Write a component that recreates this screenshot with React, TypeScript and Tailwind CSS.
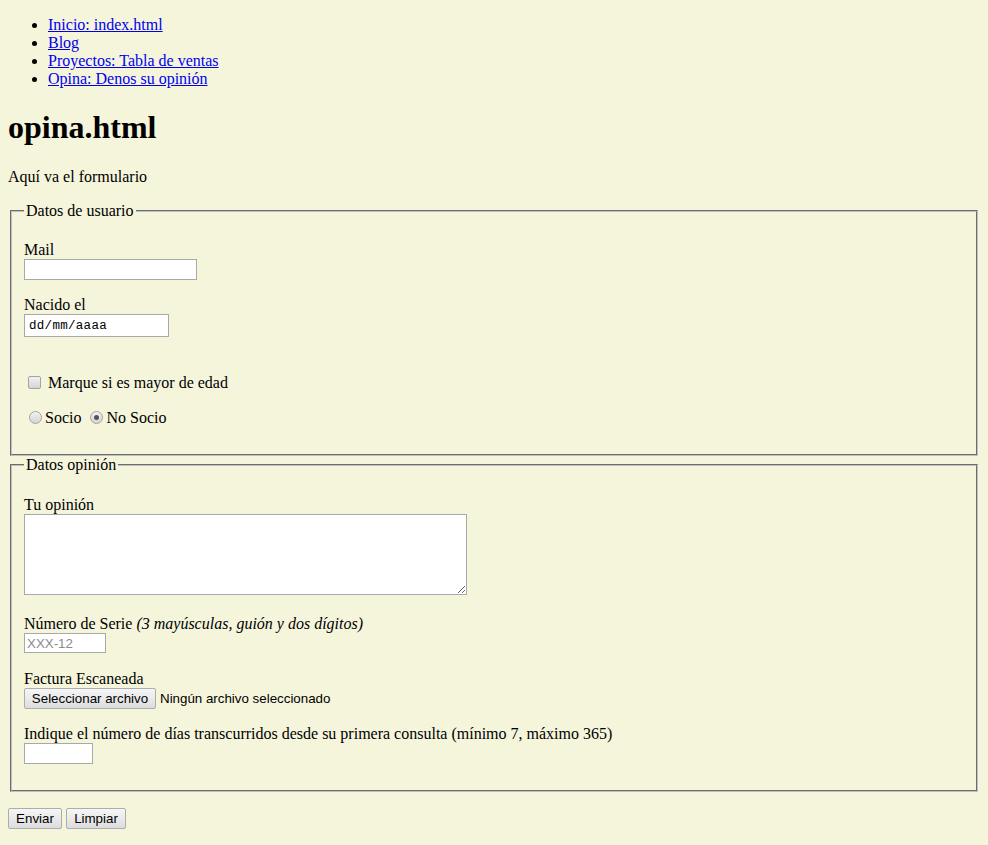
import React from 'react';

const links = [
  'Inicio: index.html',
  'Blog',
  'Proyectos: Tabla de ventas',
  'Opina: Denos su opinión',
];

const fieldsetCls =
  'mx-[2px] min-w-min border-2 [border-style:groove] border-[#c0c0c0] px-3 pt-[5.6px] pb-[10px]';

const btnCls =
  'h-[21px] rounded-[2px] border border-[#adadad] bg-gradient-to-b from-[#f6f6f6] to-[#dddddd] font-["Liberation_Sans",Arial,sans-serif] text-[13.33px] leading-none text-black';

function Radio({ checked }: { checked?: boolean }) {
  return (
    <span className="flex h-[13px] w-[13px] items-center justify-center rounded-full border border-[#a3a3a3] bg-gradient-to-b from-[#f2f2f2] to-[#d4d4d4]">
      {checked && <span className="h-[5px] w-[5px] rounded-full bg-[#555555]" />}
    </span>
  );
}

export default function App() {
  return (
    <div className="min-h-[845px] bg-[#f5f5dc] px-2 pt-4 pb-4 font-['Liberation_Serif','Times_New_Roman',serif] text-[16px] leading-[normal] text-black">
      <ul className="list-disc pl-10">
        {links.map((item) => (
          <li key={item}>
            <a href="#" className="text-[#0000ee] underline">
              {item}
            </a>
          </li>
        ))}
      </ul>

      <h1 className="mt-[21.44px] text-[32px] font-bold">opina.html</h1>

      <p className="mt-[21.44px]">Aquí va el formulario</p>

      <form className="mt-4">
        <fieldset className={fieldsetCls}>
          <legend className="px-[2px]">Datos de usuario</legend>

          <div className="mt-4">
            <label className="block">Mail</label>
            <input
              type="email"
              className="block h-[21px] w-[173px] border border-[#a9a9a9] bg-white px-[2px] outline-none"
            />
          </div>

          <div className="mt-4">
            <label className="block">Nacido el</label>
            <div className="flex h-[23px] w-[145px] items-center border border-[#a9a9a9] bg-white pl-[4px] font-['Liberation_Mono','DejaVu_Sans_Mono',monospace] text-[12.5px] tracking-[0.3px] text-black">
              dd/mm/aaaa
            </div>
          </div>

          <div className="mt-[36px] flex h-[19px] items-center">
            <span className="ml-[4px] mr-[7px] h-[13px] w-[13px] rounded-[2px] border border-[#a3a3a3] bg-gradient-to-b from-[#f2f2f2] to-[#d4d4d4]" />
            <span>Marque si es mayor de edad</span>
          </div>

          <div className="mt-4 mb-[17px] flex h-[19px] items-center">
            <span className="ml-[5px] mr-[3px]">
              <Radio />
            </span>
            <span>Socio</span>
            <span className="ml-[9px] mr-[3px]">
              <Radio checked />
            </span>
            <span>No Socio</span>
          </div>
        </fieldset>

        <fieldset className={fieldsetCls}>
          <legend className="px-[2px]">Datos opinión</legend>

          <div className="mt-4">
            <label className="block">Tu opinión</label>
            <textarea className="block h-[81px] w-[443px] border border-[#a9a9a9] bg-white outline-none" />
          </div>

          <div className="mt-5">
            <label className="block">
              Número de Serie <i>(3 mayúsculas, guión y dos dígitos)</i>
            </label>
            <input
              type="text"
              placeholder="XXX-12"
              className="block h-[20px] w-[82px] border border-[#a9a9a9] bg-white px-[2px] font-['Liberation_Sans',Arial,sans-serif] text-[13.33px] outline-none placeholder:text-[#8c8c8c]"
            />
          </div>

          <div className="mt-[17px]">
            <label className="block">Factura Escaneada</label>
            <div className="flex items-center font-['Liberation_Sans',Arial,sans-serif] text-[13.33px]">
              <button type="button" className={`${btnCls} w-[132px]`}>
                Seleccionar archivo
              </button>
              <span className="ml-[4px]">Ningún archivo seleccionado</span>
            </div>
          </div>

          <div className="mt-4">
            <label className="block">
              Indique el número de días transcurridos desde su primera consulta
              (mínimo 7, máximo 365)
            </label>
            <input
              type="number"
              className="block h-[21px] w-[69px] border border-[#a9a9a9] bg-white px-[2px] outline-none"
            />
          </div>

          <div className="h-4" />
        </fieldset>

        <div className="mt-4 flex gap-[4px]">
          <button type="submit" className={`${btnCls} w-[54px]`}>
            Enviar
          </button>
          <button type="reset" className={`${btnCls} w-[60px]`}>
            Limpiar
          </button>
        </div>
      </form>
    </div>
  );
}
